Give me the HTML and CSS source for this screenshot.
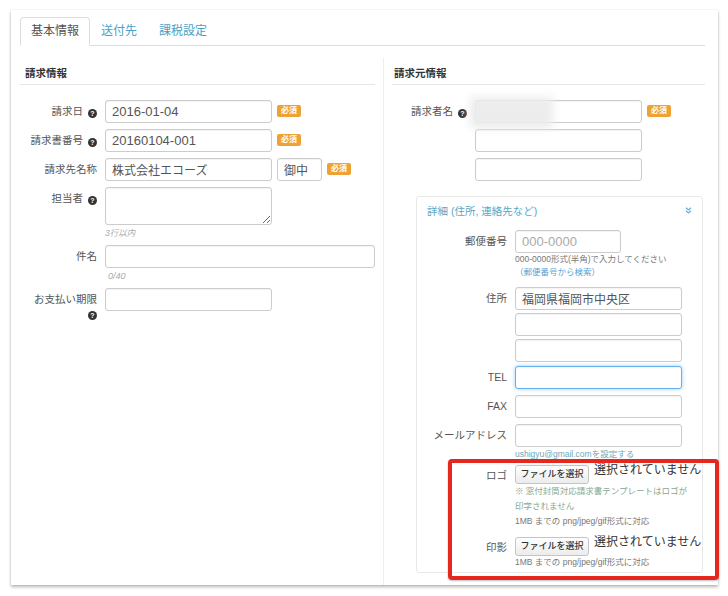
FILE: index.html
```html
<!DOCTYPE html>
<html lang="ja">
<head>
<meta charset="utf-8">
<title>請求書</title>
<link rel="stylesheet" href="styles.css">
</head>
<body>
<div class="card">
  <ul class="tabs">
    <li class="tab active">基本情報</li>
    <li class="tab">送付先</li>
    <li class="tab">課税設定</li>
  </ul>
  <div class="cols">
    <section class="col col-left">
      <h3 class="sec-title">請求情報</h3>
      <div class="row">
        <label class="lbl">請求日 <i class="q">?</i></label>
        <div class="ctl"><input class="inp w167" value="2016-01-04"><span class="badge">必須</span></div>
      </div>
      <div class="row">
        <label class="lbl">請求書番号 <i class="q">?</i></label>
        <div class="ctl"><input class="inp w167" value="20160104-001"><span class="badge">必須</span></div>
      </div>
      <div class="row">
        <label class="lbl">請求先名称</label>
        <div class="ctl"><input class="inp w167 jp" value="株式会社エコーズ"><input class="inp w45 jp gap5" value="御中"><span class="badge">必須</span></div>
      </div>
      <div class="row">
        <label class="lbl">担当者 <i class="q">?</i></label>
        <div class="ctl-col">
          <textarea class="inp area w167"></textarea>
          <div class="hint">3行以内</div>
        </div>
      </div>
      <div class="row">
        <label class="lbl">件名</label>
        <div class="ctl-col">
          <input class="inp w270" value="">
          <div class="hint hint-in">0/40</div>
        </div>
      </div>
      <div class="row">
        <label class="lbl">お支払い期限<br><i class="q">?</i></label>
        <div class="ctl"><input class="inp w167" value=""></div>
      </div>
    </section>

    <section class="col col-right">
      <h3 class="sec-title sec-title-r">請求元情報</h3>
      <div class="row">
        <label class="lbl lbl-r">請求者名 <i class="q">?</i></label>
        <div class="ctl"><input class="inp w167" value=""><span class="badge">必須</span></div>
      </div>
      <div class="row">
        <span class="lbl lbl-r"></span>
        <div class="ctl"><input class="inp w167" value=""></div>
      </div>
      <div class="row">
        <span class="lbl lbl-r"></span>
        <div class="ctl"><input class="inp w167" value=""></div>
      </div>

      <div class="panel">
        <div class="p-head">
          <span>詳細 (住所, 連絡先など)</span>
          <svg class="chev" width="7" height="7" viewBox="0 0 7 7"><path d="M1 0.8 L3.5 3 L6 0.8 M1 3.8 L3.5 6 L6 3.8" fill="none" stroke="#6aaed0" stroke-width="1.2"/></svg>
        </div>
        <div class="row">
          <label class="lbl lbl-d">郵便番号</label>
          <div class="ctl-col">
            <input class="inp w106" placeholder="000-0000">
            <div class="note">000-0000形式(半角)で入力してください</div>
            <div class="note link">（郵便番号から検索）</div>
          </div>
        </div>
        <div class="row row-tight">
          <label class="lbl lbl-d">住所</label>
          <div class="ctl-col stack">
            <input class="inp w167 jp" value="福岡県福岡市中央区">
            <input class="inp w167" value="">
            <input class="inp w167" value="">
          </div>
        </div>
        <div class="row">
          <label class="lbl lbl-d">TEL</label>
          <div class="ctl"><input class="inp w167 focus" value=""></div>
        </div>
        <div class="row">
          <label class="lbl lbl-d">FAX</label>
          <div class="ctl"><input class="inp w167" value=""></div>
        </div>
        <div class="row">
          <label class="lbl lbl-d">メールアドレス</label>
          <div class="ctl-col">
            <input class="inp w167" value="">
            <div class="note mail">ushigyu@gmail.comを設定する</div>
          </div>
        </div>
        <div class="row row-file">
          <label class="lbl lbl-d lbl-file">ロゴ</label>
          <div class="ctl-col">
            <div class="file"><span class="file-btn">ファイルを選択</span><span class="file-none">選択されていません</span></div>
            <div class="note2 green">※ 窓付封筒対応請求書テンプレートはロゴが</div>
            <div class="note2 green">印字されません</div>
            <div class="note2">1MB までの png/jpeg/gif形式に対応</div>
          </div>
        </div>
        <div class="row row-last">
          <label class="lbl lbl-d lbl-file">印影</label>
          <div class="ctl-col">
            <div class="file"><span class="file-btn">ファイルを選択</span><span class="file-none">選択されていません</span></div>
            <div class="note">1MB までの png/jpeg/gif形式に対応</div>
          </div>
        </div>
      </div>
    </section>
  </div>
</div>
<div class="blur"></div>
<div class="highlight"></div>
</body>
</html>
```

FILE: styles.css
```css
* { box-sizing: border-box; }
html, body { margin: 0; padding: 0; background: #fff; }
body {
  font-family: "Liberation Sans", "Noto Sans CJK JP", sans-serif;
  color: #555;
  width: 728px;
  height: 596px;
  position: relative;
  overflow: hidden;
}

.card {
  margin: 10px 0 0 11px;
  width: 707px;
  height: 575px;
  background: #fff;
  box-shadow: 0 2px 3px rgba(0,0,0,0.28), 0 0 1px rgba(0,0,0,0.18);
  padding: 7px 13px 0 9px;
  display: flex;
  flex-direction: column;
}

.tabs {
  display: flex;
  list-style: none;
  margin: 0;
  padding: 0;
  border-bottom: 1px solid #ddd;
}
.tab {
  padding: 0 10px;
  line-height: 27px;
  font-size: 12px;
  color: #4a9fc4;
  border: 1px solid transparent;
  border-radius: 4px 4px 0 0;
  margin-bottom: -1px;
}
.tab.active {
  color: #555;
  border-color: #ddd #ddd #fff;
  background: #fff;
}

.cols {
  display: flex;
  flex: 1;
  margin-top: 12px;
}
.col-left { width: 363px; flex: none; padding-right: 8px; }
.col-right { flex: 1; border-left: 1px solid #eee; padding-left: 8px; }

.sec-title {
  margin: 0 0 15px;
  font-size: 10.5px;
  font-weight: bold;
  color: #333;
  line-height: 14px;
  padding: 8px 0 4px 5px;
  border-bottom: 1px solid #e6e6e6;
}
.sec-title-r { padding-left: 2px; }

.row {
  display: flex;
  align-items: flex-start;
  margin-bottom: 6px;
}
.lbl {
  width: 77px;
  flex: none;
  text-align: right;
  font-size: 10.5px;
  line-height: 14px;
  padding-top: 4px;
  margin-right: 8px;
  color: #555;
}
.lbl-r { width: 75px; }
.lbl-d { width: 80px; }
.lbl-file { padding-top: 3px; }

.q {
  display: inline-block;
  width: 9px;
  height: 9px;
  border-radius: 50%;
  background: #333;
  color: #fff;
  font-style: normal;
  font-weight: bold;
  font-size: 7px;
  line-height: 9px;
  text-align: center;
  vertical-align: -1px;
  margin-left: 2px;
  font-family: "Liberation Sans", sans-serif;
}

.ctl { display: flex; align-items: flex-start; }
.ctl-col { display: flex; flex-direction: column; align-items: flex-start; }

.inp {
  height: 23px;
  border: 1px solid #ccc;
  border-radius: 3px;
  padding: 0 6px;
  font: 13px "Liberation Sans", "Noto Sans CJK JP", sans-serif;
  color: #555;
  background: #fff;
  box-shadow: inset 0 1px 1px rgba(0,0,0,0.05);
  outline: none;
  margin: 0;
}
.inp.jp { font-size: 12px; }
.inp::placeholder { color: #aaa; font-size: 13px; }
.w167 { width: 167px; }
.w270 { width: 270px; }
.w106 { width: 106px; }
.w45 { width: 45px; }
.gap5 { margin-left: 5px; }
.area { height: 38px; resize: vertical; padding: 4px 6px; }
.focus {
  border-color: #66afe9;
  box-shadow: inset 0 1px 1px rgba(0,0,0,0.05), 0 0 4px rgba(102,175,233,0.6);
}

.badge {
  display: inline-block;
  margin: 5px 0 0 5px;
  background: #eea236;
  color: #fff;
  font-size: 8px;
  font-weight: bold;
  line-height: 12px;
  padding: 0 4px;
  border-radius: 2px;
}

.hint {
  margin-top: 2px;
  font-size: 8.5px;
  line-height: 12px;
  font-style: italic;
  color: #aaa;
}
.hint-in { padding-left: 3px; font-size: 9px; }

.panel {
  margin: 15px 0 0 24px;
  width: 287px;
  border: 1px solid #e9e9e9;
  border-radius: 3px;
  padding: 0 12px 3px 10px;
}
.p-head {
  display: flex;
  justify-content: space-between;
  align-items: center;
  color: #5aa7c4;
  font-size: 10.5px;
  line-height: 14px;
  padding-top: 7px;
  margin-bottom: 12px;
}
.chev { margin-right: -2px; margin-top: -2px; }

.note {
  font-size: 8.5px;
  line-height: 13px;
  color: #777;
  white-space: nowrap;
}
.note.link { color: #5a9fd0; margin-bottom: 2px; }
.note.mail { color: #6fa8b6; margin-top: 1px; line-height: 12px; margin-bottom: -1px; }
.note2 {
  font-size: 8.5px;
  line-height: 15px;
  color: #777;
  white-space: nowrap;
}
.note2.green { color: #86a88f; }

.stack { gap: 3px; }
.row-tight { margin-bottom: 4px; }
.row-file { margin-bottom: 8px; }
.row-last { margin-bottom: 0; }

.file { display: flex; align-items: flex-start; height: 19px; }
.file-btn {
  display: inline-block;
  flex: none;
  width: 74px;
  height: 19px;
  border: 1px solid #c4c4c4;
  border-radius: 3px;
  background: linear-gradient(#fff, #ececec);
  font-size: 9px;
  line-height: 17px;
  text-align: center;
  color: #333;
  font-weight: 500;
}
.file-none {
  margin-left: 5px;
  margin-top: -2px;
  font-size: 12px;
  line-height: 14px;
  color: #333;
  white-space: nowrap;
}

.blur {
  position: absolute;
  left: 470px;
  top: 97px;
  width: 83px;
  height: 31px;
  background: #ececec;
  filter: blur(4px);
}
.highlight {
  position: absolute;
  left: 448px;
  top: 459px;
  width: 271px;
  height: 121px;
  border: 4px solid #e5271d;
  border-radius: 4px;
  box-shadow: 0 1px 2px rgba(0,0,0,0.25);
}
```
